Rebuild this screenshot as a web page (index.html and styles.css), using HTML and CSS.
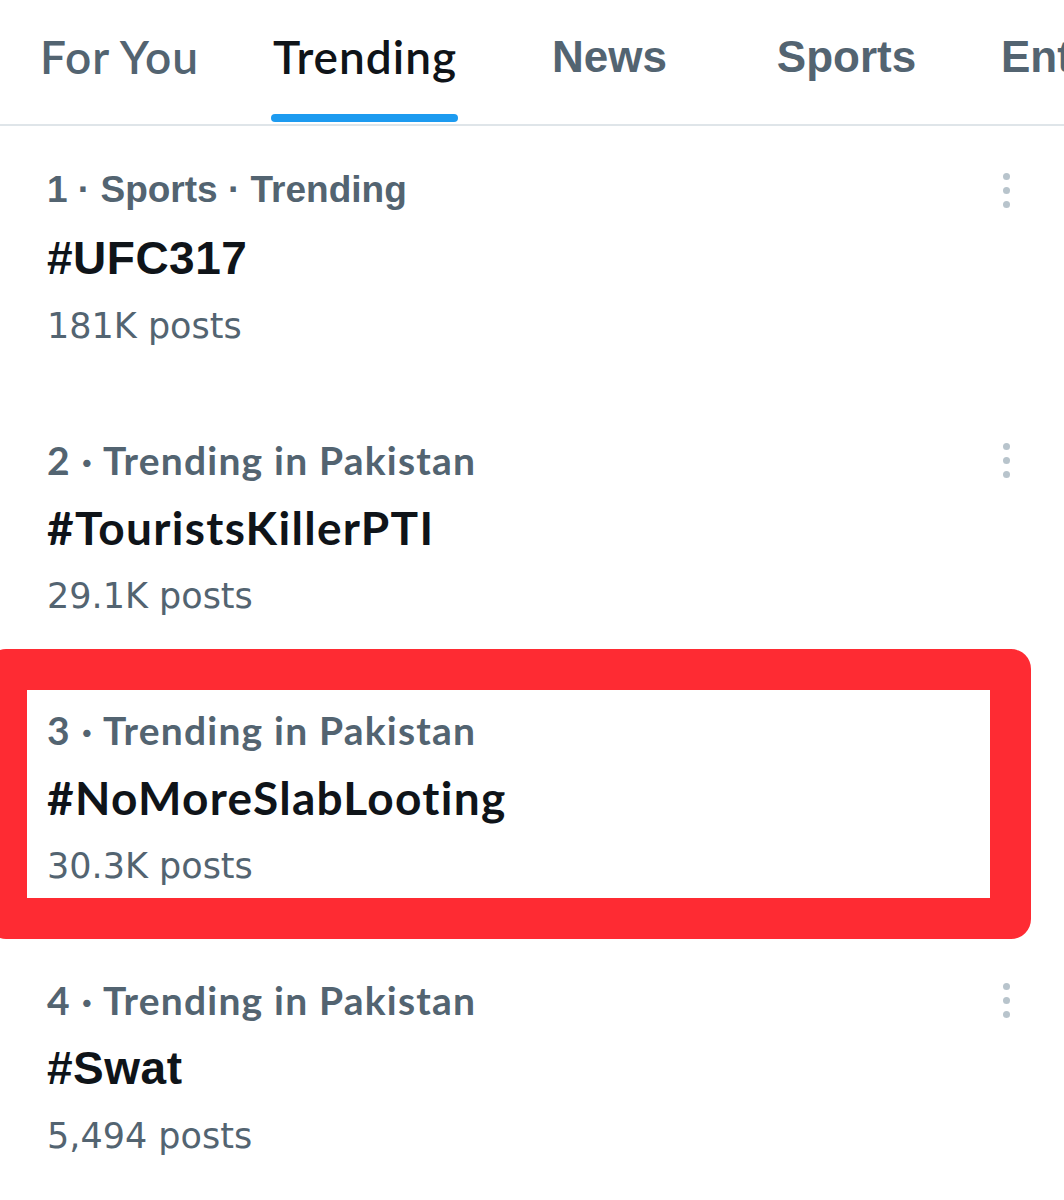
FILE: index.html
```html
<!DOCTYPE html>
<html>
<head>
<meta charset="utf-8">
<link rel="stylesheet" href="styles.css">
</head>
<body>
<div class="page">
  <nav class="tabs">
    <div class="tab tab-foryou"><span class="label lato">For You</span></div>
    <div class="tab tab-trending active"><span class="label lato">Trending<span class="bar"></span></span></div>
    <div class="tab tab-news"><span class="label helv">News</span></div>
    <div class="tab tab-sports"><span class="label helv">Sports</span></div>
    <div class="tab tab-ent"><span class="label helv">Entertainment</span></div>
  </nav>

  <section class="trend">
    <div class="trend-body">
      <div class="meta helv-bold">1 · Sports · Trending</div>
      <div class="title helv-bold">#UFC317</div>
      <div class="count">181K posts</div>
    </div>
    <div class="more"><span class="dot"></span><span class="dot"></span><span class="dot"></span></div>
  </section>

  <section class="trend">
    <div class="trend-body">
      <div class="meta lato-bold">2 · Trending in Pakistan</div>
      <div class="title lato-bold">#TouristsKillerPTI</div>
      <div class="count">29.1K posts</div>
    </div>
    <div class="more"><span class="dot"></span><span class="dot"></span><span class="dot"></span></div>
  </section>

  <section class="trend highlighted">
    <div class="trend-body">
      <div class="meta lato-bold">3 · Trending in Pakistan</div>
      <div class="title lato-bold">#NoMoreSlabLooting</div>
      <div class="count">30.3K posts</div>
    </div>
    <div class="more"><span class="dot"></span><span class="dot"></span><span class="dot"></span></div>
    <div class="annotation"></div>
  </section>

  <section class="trend">
    <div class="trend-body">
      <div class="meta lato-bold">4 · Trending in Pakistan</div>
      <div class="title helv-bold">#Swat</div>
      <div class="count">5,494 posts</div>
    </div>
    <div class="more"><span class="dot"></span><span class="dot"></span><span class="dot"></span></div>
  </section>
</div>
</body>
</html>
```

FILE: styles.css
```css
* { box-sizing: border-box; }
html, body { margin: 0; padding: 0; background: #ffffff; }
body { font-family: "Liberation Sans", Arial, sans-serif; color: #0f1419; }

.page {
  width: 1064px;
  height: 1200px;
  overflow: hidden;
  background: #ffffff;
}

/* Tabs */
.tabs {
  display: flex;
  height: 126px;
  border-bottom: 2px solid #dfe5e9;
  overflow: hidden;
  white-space: nowrap;
}
.tab {
  flex: 0 0 auto;
  display: flex;
  justify-content: center;
  padding-top: 31px;
}
.tab-foryou { width: 239px; }
.tab-trending { width: 252px; }
.tab-news { width: 237px; }
.tab-sports { width: 237px; }
.tab-ent { width: auto; justify-content: flex-start; padding-left: 36px; }

.label {
  position: relative;
  display: inline-block;
  font-size: 44px;
  line-height: 52px;
  color: #536471;
}
.label.lato {
  font-family: Lato, sans-serif;
  font-weight: 600;
  font-size: 46px;
  letter-spacing: 1px;
}
.label.helv { font-family: "Liberation Sans", Arial, sans-serif; font-weight: 700; }
.active .label { color: #0f1419; }
.bar {
  position: absolute;
  left: -2px;
  right: -1px;
  top: 83px;
  height: 8px;
  border-radius: 4px;
  background: #1d9bf0;
}

/* Trends */
.trend {
  position: relative;
  display: flex;
  height: 270px;
  padding: 30px 0 0 47px;
}
.trend-body { flex: 1 1 auto; }
.meta, .title, .count {
  height: 68px;
  line-height: 68px;
  white-space: nowrap;
}
.meta { color: #536471; font-size: 37px; }
.meta.lato-bold { font-size: 39px; letter-spacing: 1.2px; }
.title { color: #0f1419; font-size: 44px; }
.title.lato-bold { font-size: 46px; letter-spacing: 1.3px; }
.title.helv-bold { font-size: 46px; letter-spacing: 0.5px; }
.count {
  color: #536471;
  font-family: "DejaVu Sans", sans-serif;
  font-size: 35px;
}
.helv-bold { font-family: "Liberation Sans", Arial, sans-serif; font-weight: 700; }
.lato-bold { font-family: Lato, sans-serif; font-weight: 700; }

.more {
  flex: 0 0 auto;
  width: 96px;
  display: flex;
  flex-direction: column;
  align-items: center;
  gap: 7px;
  padding-top: 17px;
  padding-right: 20px;
}
.dot {
  width: 7px;
  height: 7px;
  border-radius: 50%;
  background: #b8c4cc;
}

.annotation {
  position: absolute;
  left: -14px;
  top: -17px;
  width: 1045px;
  height: 290px;
  border: 41px solid #fe2b33;
  border-radius: 20px;
  pointer-events: none;
}
```
